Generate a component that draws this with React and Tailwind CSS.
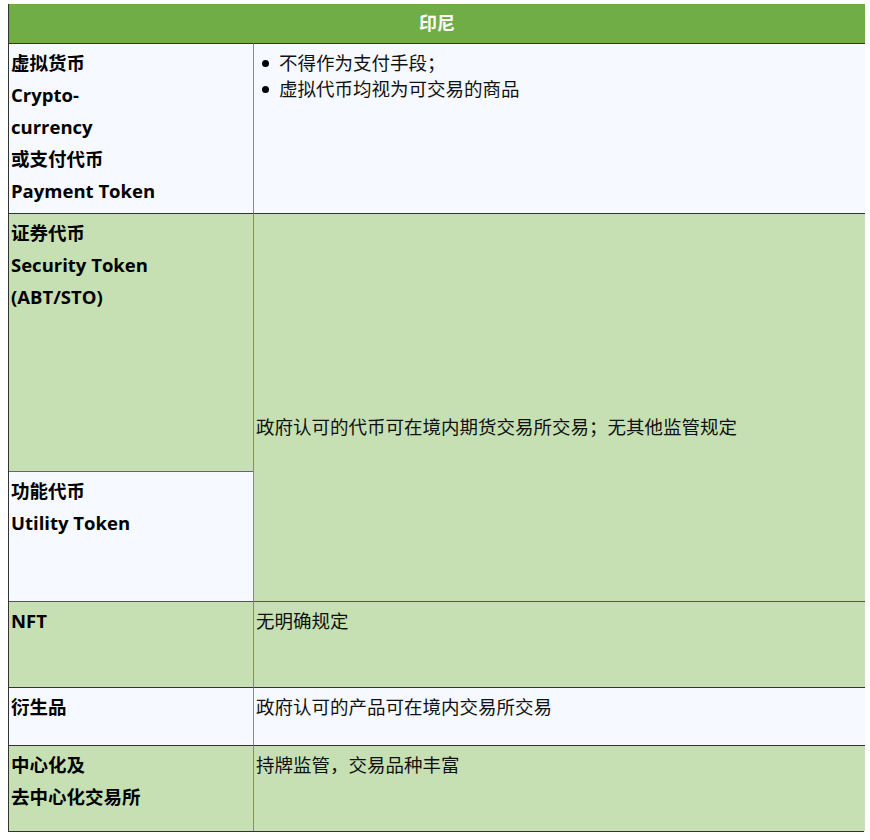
export default function App() {
  const font = { fontFamily: '"Open Sans", "Noto Sans CJK SC", sans-serif' };
  const left = "border-t border-[#333] pl-[2px] pt-[3px] text-[18.5px] leading-[32px] font-bold text-black";
  const right = "border-t border-l border-t-[#333] border-l-[#888] pl-[2px] pt-[6px] text-[18.5px] leading-[26px] text-[#111]";

  return (
    <div className="min-h-screen bg-white" style={font}>
      <div className="ml-[8px] mt-[4px] w-[856px] grid grid-cols-[244px_612px] grid-rows-[39px_170px_258px_130px_86px_58px_86px] border-l border-b border-[#333]">
        {/* Header */}
        <div className="col-span-2 bg-[#70ad47] text-white font-bold text-[18px] flex items-center justify-center">
          印尼
        </div>

        {/* Crypto */}
        <div className={`${left} bg-[#f6f9ff]`}>
          <div>虚拟货币</div>
          <div>Crypto-</div>
          <div>currency</div>
          <div>或支付代币</div>
          <div>Payment Token</div>
        </div>
        <div className={`${right} bg-[#f6f9ff] pl-[8px]`}>
          <ul className="list-none">
            <li className="flex items-center gap-[10px] h-[26px]">
              <span className="w-[7px] h-[7px] rounded-full bg-black" />
              <span>不得作为支付手段；</span>
            </li>
            <li className="flex items-center gap-[10px] h-[26px]">
              <span className="w-[7px] h-[7px] rounded-full bg-black" />
              <span>虚拟代币均视为可交易的商品</span>
            </li>
          </ul>
        </div>

        {/* Security token */}
        <div className={`${left} bg-[#c6e0b4]`}>
          <div>证券代币</div>
          <div>Security Token</div>
          <div>(ABT/STO)</div>
        </div>
        <div className={`${right} row-span-2 bg-[#c6e0b4] pt-[200px]`}>
          政府认可的代币可在境内期货交易所交易；无其他监管规定
        </div>

        {/* Utility token */}
        <div className={`${left} bg-[#f6f9ff] border-[#666]`}>
          <div>功能代币</div>
          <div>Utility Token</div>
        </div>

        {/* NFT */}
        <div className={`${left} bg-[#c6e0b4] border-[#555]`}>NFT</div>
        <div className={`${right} bg-[#c6e0b4] border-t-[#555]`}>无明确规定</div>

        {/* Derivatives */}
        <div className={`${left} bg-[#f6f9ff] border-[#222]`}>衍生品</div>
        <div className={`${right} bg-[#f6f9ff] border-t-[#222]`}>政府认可的产品可在境内交易所交易</div>

        {/* Exchanges */}
        <div className={`${left} bg-[#c6e0b4]`}>
          <div>中心化及</div>
          <div>去中心化交易所</div>
        </div>
        <div className={`${right} bg-[#c6e0b4]`}>持牌监管，交易品种丰富</div>
      </div>
    </div>
  );
}
